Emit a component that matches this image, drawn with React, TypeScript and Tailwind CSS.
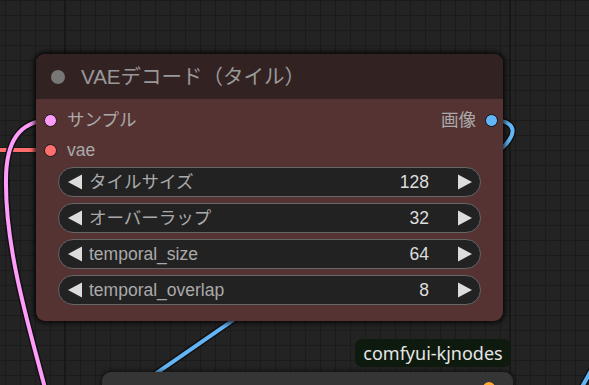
import React from "react";

const sans = "font-['Liberation_Sans','Noto_Sans_CJK_JP',sans-serif]";

function Arrow({ dir }: { dir: "left" | "right" }) {
  return (
    <svg width="16" height="16" viewBox="0 0 16 16" className="shrink-0">
      {dir === "left" ? (
        <polygon points="15,0.5 15,15.5 1,8" fill="#dddddd" />
      ) : (
        <polygon points="1,0.5 1,15.5 15,8" fill="#dddddd" />
      )}
    </svg>
  );
}

function NumberWidget({ label, value }: { label: string; value: string }) {
  return (
    <div className="flex h-[30px] items-center rounded-full border border-[#666666] bg-[#222222] pl-[8px] pr-[7px]">
      <Arrow dir="left" />
      <span className="ml-[6px] flex-1 whitespace-nowrap text-[17.5px] leading-[22px] text-[#aaaaaa]">
        {label}
      </span>
      <span className="mr-[28px] text-[17.5px] leading-[22px] text-[#dddddd]">{value}</span>
      <Arrow dir="right" />
    </div>
  );
}

function Wires() {
  return (
    <svg className="absolute inset-0" width="589" height="385" viewBox="0 0 589 385">
      {/* vae */}
      <path d="M -5 150 L 40 150" stroke="#1a1a1a" strokeWidth="6" fill="none" />
      <path d="M -5 150 L 40 150" stroke="#ff6e6e" strokeWidth="4" fill="none" />
      {/* samples */}
      <g fill="none" strokeLinecap="round">
        <path d="M 46 392 C 30 330, 5 250, 6 180 C 6 140, 20 122, 48 120" stroke="#111111" strokeWidth="7" />
        <path d="M 46 392 C 30 330, 5 250, 6 180 C 6 140, 20 122, 48 120" stroke="#ff9cf9" strokeWidth="4" />
      </g>
      {/* image out */}
      <g fill="none">
        <path d="M 490 120 C 540 120, 500 165, 436 180 L 90 419" stroke="#111111" strokeWidth="7" />
        <path d="M 490 120 C 540 120, 500 165, 436 180 L 90 419" stroke="#64b5f6" strokeWidth="4" />
        <path d="M 578 394 L 596 362" stroke="#111111" strokeWidth="7" />
        <path d="M 578 394 L 596 362" stroke="#64b5f6" strokeWidth="4" />
      </g>
    </svg>
  );
}

export default function App() {
  return (
    <div
      className={`relative h-[385px] w-[589px] overflow-hidden bg-[#232323] ${sans} bg-[linear-gradient(to_right,#181818_2px,transparent_2px),linear-gradient(to_right,#1b1b1b_1px,transparent_1px),linear-gradient(to_bottom,#1b1b1b_1px,transparent_1px)] bg-[size:445px_100%,15px_15px,15px_15px] bg-[position:64px_0,5px_0,0_0]`}
    >
      <Wires />

      {/* main node */}
      <div className="absolute left-[36px] top-[54px] flex h-[267px] w-[467px] flex-col rounded-[9px] bg-[#553333] shadow-[0_0_5px_2px_rgba(0,0,0,0.8)]">
        <div className="flex h-[45px] items-center rounded-t-[9px] bg-[#332222] pl-[15px]">
          <span className="size-[14px] rounded-full bg-[#777777]" />
          <span className="ml-[16px] text-[20.5px] leading-[26px] text-[#999999]">VAEデコード（タイル）</span>
        </div>

        <div className="flex pt-[6px]">
          <div className="flex flex-1 flex-col">
            <div className="flex h-[30px] items-center pl-[8px]">
              <span className="size-[13px] rounded-full border border-[#1a1a1a] bg-[#ff9cf9]" />
              <span className="ml-[10px] text-[17.5px] leading-[22px] text-[#aaaaaa]">サンプル</span>
            </div>
            <div className="flex h-[30px] items-center pl-[8px]">
              <span className="size-[13px] rounded-full border border-[#1a1a1a] bg-[#ff6e6e]" />
              <span className="ml-[10px] text-[17.5px] leading-[22px] text-[#aaaaaa]">vae</span>
            </div>
          </div>
          <div className="flex h-[30px] items-center pr-[5px]">
            <span className="mr-[9px] text-[17.5px] leading-[22px] text-[#aaaaaa]">画像</span>
            <span className="size-[13px] rounded-full border border-[#111111] bg-[#64b5f6]" />
          </div>
        </div>

        <div className="mx-[22px] mt-[2px] flex flex-col gap-[6px]">
          <NumberWidget label="タイルサイズ" value="128" />
          <NumberWidget label="オーバーラップ" value="32" />
          <NumberWidget label="temporal_size" value="64" />
          <NumberWidget label="temporal_overlap" value="8" />
        </div>
      </div>

      {/* badge */}
      <div className="absolute left-[355px] top-[339px] flex h-[28px] w-[156px] items-center justify-center rounded-[7px] bg-[#0e1a0e] font-['Noto_Sans',sans-serif] text-[18px] leading-[24px] text-[#e6e6e6]">
        comfyui-kjnodes
      </div>

      {/* next node */}
      <div className="absolute left-[102px] top-[372px] h-[40px] w-[411px] rounded-t-[9px] bg-[#353535] shadow-[0_0_4px_1px_rgba(0,0,0,0.6)]">
        <span className="absolute left-[381px] top-[10px] size-[12px] rounded-full bg-[#ffa931]" />
      </div>
    </div>
  );
}
